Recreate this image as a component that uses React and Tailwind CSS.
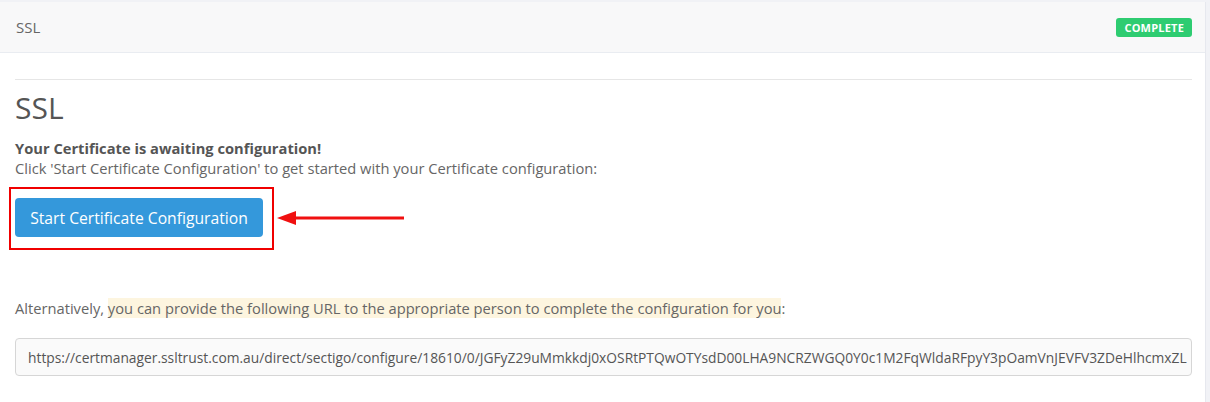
import React from "react";

const URL =
  "https://certmanager.ssltrust.com.au/direct/sectigo/configure/18610/0/JGFyZ29uMmkkdj0xOSRtPTQwOTYsdD00LHA9NCRZWGQ0Y0c1M2FqWldaRFpyY3pOamVnJEVFV3ZDeHlhcmxZL1hVQ2tGR0RrZ1E";

export default function App() {
  return (
    <div
      className="w-[1210px] h-[402px] overflow-hidden bg-[#f1f2f6] pt-[2px] pr-[4px]"
      style={{ fontFamily: "'Open Sans', 'Liberation Sans', sans-serif" }}
    >
      <div className="w-[1206px] h-[400px] bg-white border-r border-[#e6e8ee]">
        <div className="h-[51px] bg-[#f8f8f9] border-b border-[#e9ecf1] flex items-center justify-between pl-4 pr-[13px]">
          <span className="text-[15px] text-[#666]">SSL</span>
          <span className="h-[19px] px-[8px] rounded-[3px] bg-[#2ecc71] text-white text-[11px] font-bold leading-[19px] tracking-[0.2px]">
            COMPLETE
          </span>
        </div>
        <div className="pl-[15px] pr-[13px] pt-[26px]">
          <hr className="border-0 border-t border-[#e6e6e6]" />
          <h2 className="mt-[11px] text-[30px] leading-[33px] text-[#555] font-normal">SSL</h2>
          <div className="mt-[14px] text-[14.7px] leading-[20px] text-[#555]">
            <div className="font-bold">Your Certificate is awaiting configuration!</div>
            <div className="text-[#666]">
              Click 'Start Certificate Configuration' to get started with your Certificate configuration:
            </div>
          </div>
          <div className="mt-[20px] flex items-center">
            <div className="relative">
              <button className="h-[39px] w-[248px] rounded-[4px] bg-[#3498db] text-white text-[15.7px] leading-[22px]">
                Start Certificate Configuration
              </button>
              <div className="absolute left-[-6px] top-[-11px] w-[265px] h-[63px] border-2 border-[#f00000]" />
            </div>
            <svg width="128" height="16" viewBox="0 0 128 16" className="ml-[14px] mt-[1px]">
              <line x1="14" y1="8" x2="127" y2="8" stroke="#f01010" strokeWidth="3" />
              <polygon points="0,8 19,1 19,15" fill="#f01010" />
            </svg>
          </div>
          <p className="mt-[61px] text-[14.7px] leading-[20px] text-[#666]">
            Alternatively, <span className="bg-[#fdf5df]">you can provide the following URL to the appropriate person to complete the configuration for you</span>:
          </p>
          <input
            readOnly
            value={URL}
            className="mt-[20px] block w-full h-[38px] pl-[12px] pr-[4px] rounded-[4px] border border-[#d6d6d6] bg-[#fafafa] text-[13.8px] text-[#555] outline-none"
            style={{ fontFamily: "'Open Sans', 'Liberation Sans', sans-serif" }}
          />
        </div>
      </div>
    </div>
  );
}
